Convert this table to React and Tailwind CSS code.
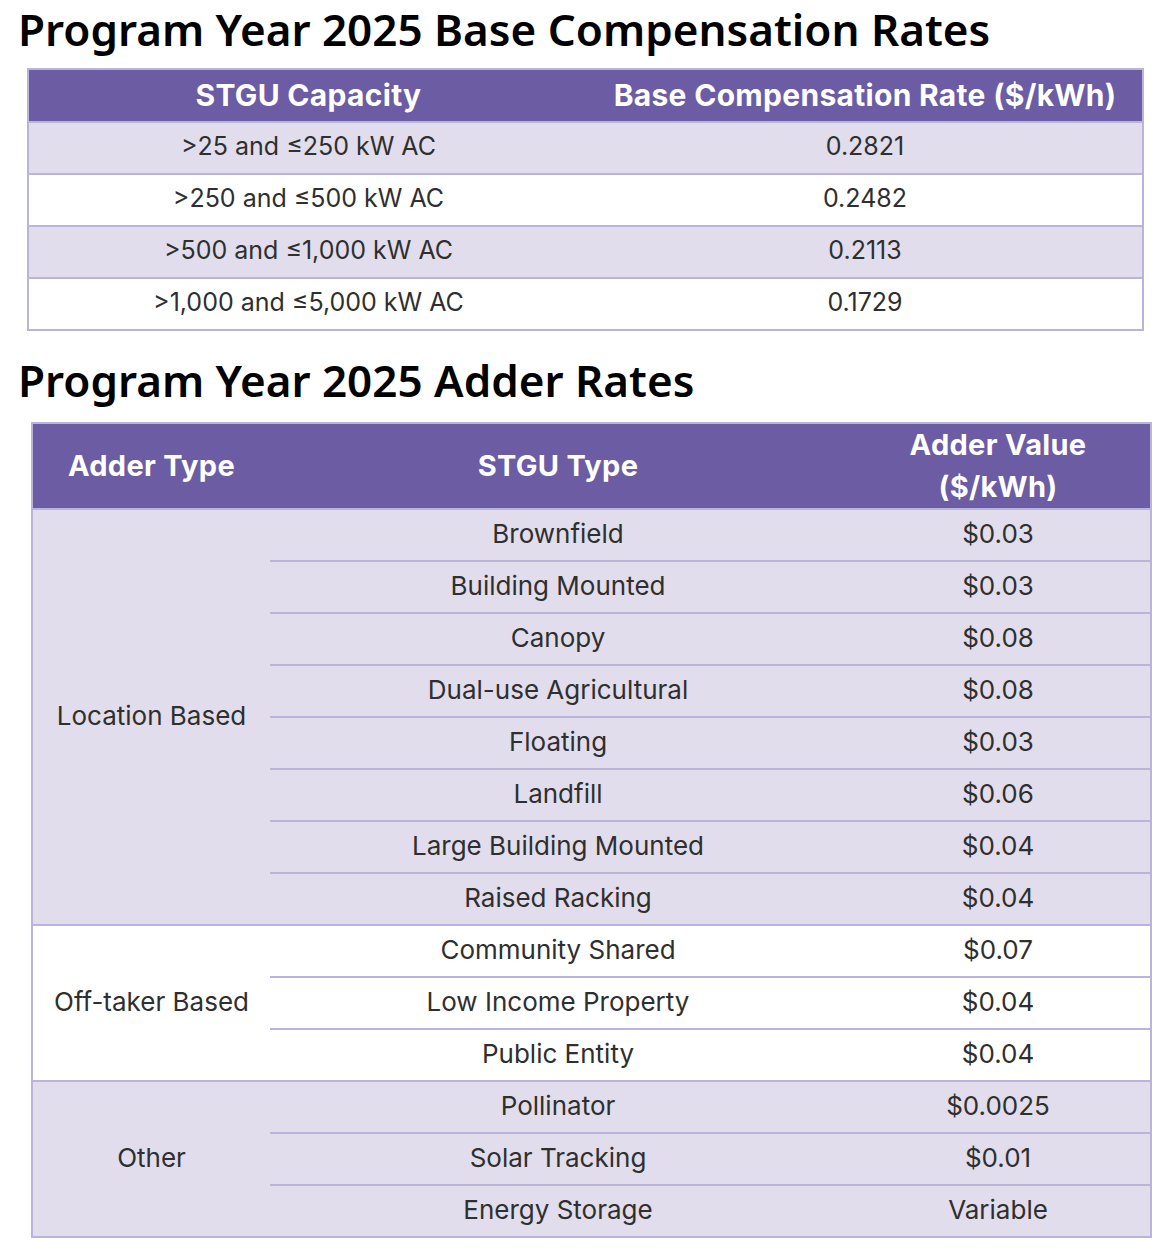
import React from "react";

const rates = [
  [">25 and ≤250 kW AC", "0.2821"],
  [">250 and ≤500 kW AC", "0.2482"],
  [">500 and ≤1,000 kW AC", "0.2113"],
  [">1,000 and ≤5,000 kW AC", "0.1729"],
];

const groups = [
  {
    name: "Location Based",
    bg: "bg-[#e1ddec]",
    rows: [
      ["Brownfield", "$0.03"],
      ["Building Mounted", "$0.03"],
      ["Canopy", "$0.08"],
      ["Dual-use Agricultural", "$0.08"],
      ["Floating", "$0.03"],
      ["Landfill", "$0.06"],
      ["Large Building Mounted", "$0.04"],
      ["Raised Racking", "$0.04"],
    ],
  },
  {
    name: "Off-taker Based",
    bg: "bg-white",
    rows: [
      ["Community Shared", "$0.07"],
      ["Low Income Property", "$0.04"],
      ["Public Entity", "$0.04"],
    ],
  },
  {
    name: "Other",
    bg: "bg-[#e1ddec]",
    rows: [
      ["Pollinator", "$0.0025"],
      ["Solar Tracking", "$0.01"],
      ["Energy Storage", "Variable"],
    ],
  },
];

export default function App() {
  return (
    <div className="w-[1170px] h-[1250px] bg-white font-['Inter',sans-serif]">
      <h1 className="font-['Noto_Sans',sans-serif] font-semibold text-[44px] leading-none text-black pl-[18px] pt-[7px] h-[68px]">
        Program Year 2025 Base Compensation Rates
      </h1>
      <table className="ml-[27px] w-[1115px] table-fixed border-collapse border-2 border-[#bab3da]">
        <colgroup>
          <col className="w-[560px]" />
          <col className="w-[555px]" />
        </colgroup>
        <thead>
          <tr className="h-[53px] bg-[#6b5ca4] text-white">
            <th className="font-bold text-[30px] tracking-[0.3px] text-center align-middle">STGU Capacity</th>
            <th className="font-bold text-[30px] tracking-[0.3px] text-center align-middle">Base Compensation Rate ($/kWh)</th>
          </tr>
        </thead>
        <tbody>
          {rates.map((r, i) => (
            <tr
              key={i}
              className={`h-[52px] border-t-2 border-[#bab3da] text-[#2f2f2f] text-[25px] ${i % 2 === 0 ? "bg-[#e1ddec]" : "bg-white"}`}
            >
              <td className="text-center align-middle pb-[3px]">{r[0]}</td>
              <td className="text-center align-middle pb-[3px]">{r[1]}</td>
            </tr>
          ))}
        </tbody>
      </table>
      <h2 className="font-['Noto_Sans',sans-serif] font-semibold text-[44px] leading-none text-black pl-[18px] pt-[27px] h-[91px]">
        Program Year 2025 Adder Rates
      </h2>
      <table className="ml-[31px] w-[1119px] table-fixed border-collapse border-2 border-[#bab3da]">
        <colgroup>
          <col className="w-[238px]" />
          <col className="w-[576px]" />
          <col className="w-[305px]" />
        </colgroup>
        <thead>
          <tr className="h-[86px] bg-[#6b5ca4] text-white">
            <th className="p-0 font-bold text-[29px] tracking-[0.3px] text-center align-middle">Adder Type</th>
            <th className="p-0 font-bold text-[29px] tracking-[0.3px] text-center align-middle">STGU Type</th>
            <th className="p-0 font-bold text-[29px] tracking-[0.3px] text-center align-middle leading-[42px]">
              Adder Value
              <br />
              ($/kWh)
            </th>
          </tr>
        </thead>
        <tbody>
          {groups.map((g) =>
            g.rows.map((r, i) => (
              <tr
                key={g.name + i}
                className={`h-[52px] border-t-2 border-[#bab3da] text-[#2f2f2f] text-[26px] ${g.bg}`}
              >
                {i === 0 && (
                  <td rowSpan={g.rows.length} className="text-center align-middle pb-[3px]">
                    {g.name}
                  </td>
                )}
                <td className="text-center align-middle pb-[3px]">{r[0]}</td>
                <td className="text-center align-middle pb-[3px]">{r[1]}</td>
              </tr>
            ))
          )}
        </tbody>
      </table>
    </div>
  );
}
